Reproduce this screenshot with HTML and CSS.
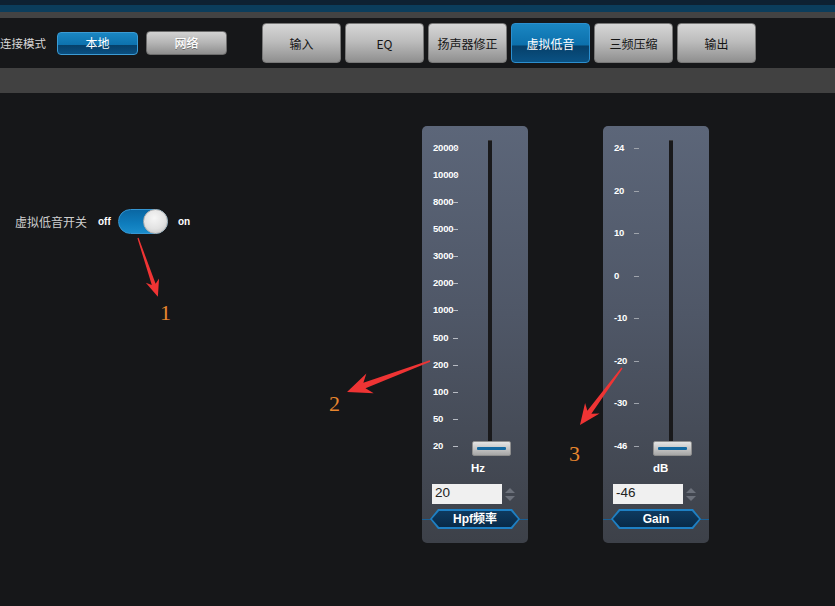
FILE: index.html
```html
<!DOCTYPE html>
<html lang="zh">
<head>
<meta charset="utf-8">
<title>虚拟低音</title>
<link rel="stylesheet" href="styles.css">
</head>
<body>
<div class="app">
  <div class="topstrip"></div>
  <div class="toolbar">
    <div class="conn">
      <span class="conn-label">连接模式</span>
      <button class="sbtn sbtn-active">本地</button>
      <button class="sbtn">网络</button>
    </div>
    <nav class="tabs">
      <button class="tab">输入</button>
      <button class="tab">EQ</button>
      <button class="tab">扬声器修正</button>
      <button class="tab tab-active">虚拟低音</button>
      <button class="tab">三频压缩</button>
      <button class="tab">输出</button>
    </nav>
  </div>
  <div class="subbar"></div>
  <main class="main">
    <section class="switch-area">
      <div class="switch-row">
        <span class="switch-label">虚拟低音开关</span>
        <span class="sw-text sw-off">off</span>
        <span class="toggle"><span class="knob"></span></span>
        <span class="sw-text sw-on">on</span>
      </div>
    </section>

    <div class="panel">
      <div class="scale">
        <div class="ticks">
          <div class="tick-row">20000</div>
          <div class="tick-row">10000</div>
          <div class="tick-row">8000</div>
          <div class="tick-row">5000</div>
          <div class="tick-row">3000</div>
          <div class="tick-row">2000</div>
          <div class="tick-row">1000</div>
          <div class="tick-row">500</div>
          <div class="tick-row">200</div>
          <div class="tick-row">100</div>
          <div class="tick-row">50</div>
          <div class="tick-row">20</div>
        </div>
        <div class="track"></div>
        <div class="thumb"></div>
      </div>
      <div class="unit unit-hz">Hz</div>
      <div class="value-row">
        <input class="value" type="text" value="20">
        <span class="spin"><span class="spin-up"></span><span class="spin-down"></span></span>
      </div>
      <div class="btn-row"><span class="hexbtn"><span class="hexbtn-in"></span><span class="hexbtn-text">Hpf频率</span></span></div>
    </div>

    <div class="panel panel-gain">
      <div class="scale">
        <div class="ticks">
          <div class="tick-row">24</div>
          <div class="tick-row">20</div>
          <div class="tick-row">10</div>
          <div class="tick-row">0</div>
          <div class="tick-row">-10</div>
          <div class="tick-row">-20</div>
          <div class="tick-row">-30</div>
          <div class="tick-row">-46</div>
        </div>
        <div class="track"></div>
        <div class="thumb"></div>
      </div>
      <div class="unit unit-db">dB</div>
      <div class="value-row">
        <input class="value" type="text" value="-46">
        <span class="spin"><span class="spin-up"></span><span class="spin-down"></span></span>
      </div>
      <div class="btn-row"><span class="hexbtn"><span class="hexbtn-in"></span><span class="hexbtn-text">Gain</span></span></div>
    </div>
  </main>

  <svg class="annot" width="835" height="606" viewBox="0 0 835 606">
    <g fill="#ef3434">
      <polygon transform="translate(138 238) rotate(71.3)" points="0,-0.6 49,-2 45,-7 62,0 45,7 49,2 0,0.6"/>
      <polygon transform="translate(430 361) rotate(159.5)" points="0,-0.8 70,-3 64,-10.5 88.6,0 64,10.5 70,3 0,0.8"/>
      <polygon transform="translate(622 368) rotate(126.4)" points="0,-0.7 55,-2.5 50,-9 70.8,0 50,9 55,2.5 0,0.7"/>
    </g>
    <g class="annot-num">
      <text x="160" y="320">1</text>
      <text x="329" y="411">2</text>
      <text x="569" y="461">3</text>
    </g>
  </svg>
</div>
</body>
</html>
```

FILE: styles.css
```css
* { box-sizing: border-box; }

html, body {
  margin: 0;
  padding: 0;
  background: #161719;
}

.app {
  position: relative;
  width: 835px;
  height: 606px;
  overflow: hidden;
  background: #161719;
  font-family: "Noto Sans CJK SC", "Liberation Sans", sans-serif;
}

.topstrip {
  height: 18px;
  background: linear-gradient(to bottom, #0e2132 0, #0e2132 5px, #0b3d5c 5px, #0b3d5c 12px, #434343 12px, #434343 18px);
}

.toolbar {
  height: 50px;
  display: flex;
  align-items: flex-start;
}

.conn {
  height: 50px;
  display: flex;
  align-items: center;
}

.conn-label {
  width: 45px;
  font-size: 11.5px;
  color: #d8d8d8;
  white-space: nowrap;
}

.sbtn {
  width: 81px;
  height: 24px;
  margin: 0;
  padding: 0;
  border: 1px solid #6c6c6c;
  border-radius: 4px;
  background: linear-gradient(to bottom, #d2d2d2 0%, #b4b4b4 50%, #8e8e8e 100%);
  color: #ffffff;
  font-family: "Noto Sans CJK SC", sans-serif;
  font-size: 12px;
  font-weight: 500;
  line-height: 20px;
  text-shadow: 0 1px 0 rgba(0, 0, 0, 0.35);
}

.sbtn:first-of-type { margin-left: 12px; }
.sbtn + .sbtn { margin-left: 8px; }

.sbtn-active {
  height: 23px;
  border-color: #3b9bd4;
  background: linear-gradient(to bottom, #1a86c2 0%, #0d72ae 55%, #06406a 58%, #0a4f80 100%);
  color: #ffffff;
  font-weight: 400;
  text-shadow: none;
}

.tabs {
  display: flex;
  gap: 4px;
  margin-left: 35px;
  padding-top: 5px;
}

.tab {
  width: 79px;
  height: 40px;
  margin: 0;
  padding: 0;
  border: 1px solid #777;
  border-radius: 4px;
  background: linear-gradient(to bottom, #d6d6d6 0%, #bdbdbd 45%, #a4a4a4 75%, #8f8f8f 100%);
  color: #151515;
  font-family: "Noto Sans CJK SC", sans-serif;
  font-size: 12px;
}

.tab-active {
  border-color: #2c8fcf;
  background: linear-gradient(to bottom, #1a86c2 0%, #0c70ac 55%, #06406a 58%, #0a5284 100%);
  color: #ffffff;
}

.subbar {
  height: 25px;
  background: #414141;
}

.main {
  display: flex;
  align-items: flex-start;
  height: 513px;
}

.switch-area {
  width: 422px;
  padding-top: 116px;
  padding-left: 15px;
}

.switch-row {
  display: flex;
  align-items: center;
  height: 25px;
}

.switch-label {
  width: 72px;
  font-size: 12px;
  color: #cfcfcf;
  white-space: nowrap;
}

.sw-text {
  font-family: "Liberation Sans", sans-serif;
  font-weight: bold;
  font-size: 10px;
  color: #ffffff;
}

.sw-off { margin-left: 11px; width: 20px; }
.sw-on { margin-left: 10px; }

.toggle {
  width: 50px;
  height: 25px;
  border-radius: 13px;
  border: 1px solid #3596d2;
  background: linear-gradient(to bottom, #0a67a3 0%, #0f7dbd 60%, #1a8cca 100%);
  display: flex;
  justify-content: flex-end;
  align-items: center;
}

.knob {
  width: 25px;
  height: 25px;
  margin-right: -1px;
  border-radius: 50%;
  border: 1px solid #b0b0b0;
  background: radial-gradient(circle at 45% 35%, #f6f6f6 0%, #e2e2e2 55%, #bdbdbd 100%);
}

.panel {
  position: relative;
  width: 106px;
  height: 417px;
  margin-top: 33px;
  padding-top: 16px;
  border-radius: 5px;
  background: linear-gradient(to bottom, #5c6679 0%, #4f5767 45%, #3d4149 100%);
}

.panel-gain { margin-left: 75px; }

.scale {
  position: relative;
  height: 310px;
}

.ticks {
  height: 100%;
  display: flex;
  flex-direction: column;
  justify-content: space-between;
  padding-left: 11px;
}

.tick-row {
  position: relative;
  height: 12px;
  line-height: 12px;
  font-family: "Liberation Sans", sans-serif;
  font-weight: bold;
  font-size: 9.5px;
  color: #ffffff;
  letter-spacing: -0.2px;
}

.tick-row::after {
  content: "";
  position: absolute;
  left: 20px;
  top: 6px;
  width: 5px;
  height: 1px;
  background: #b8bcc4;
}

.panel-gain .tick-row::after { background: #9ea3ab; }

.track {
  position: absolute;
  left: 66px;
  top: -2px;
  width: 4px;
  height: 305px;
  background: #19191b;
  border-top: 1px solid #3a3a3c;
}

.thumb {
  position: absolute;
  left: 50px;
  top: 299px;
  width: 39px;
  height: 15px;
  border: 1px solid #8e8e8e;
  border-radius: 2px;
  background: linear-gradient(to bottom, #e4e4e4 0%, #c6c6c6 50%, #a6a6a6 100%);
}

.thumb::after {
  content: "";
  position: absolute;
  left: 4px;
  right: 4px;
  top: 5px;
  height: 3px;
  border-radius: 1px;
  background: #1368a0;
}

.unit {
  margin-top: 9px;
  height: 14px;
  line-height: 14px;
  font-family: "Liberation Sans", sans-serif;
  font-weight: bold;
  font-size: 11.5px;
  color: #ffffff;
}

.unit-hz { padding-left: 49px; }
.unit-db { padding-left: 50px; }

.value-row {
  margin-top: 9px;
  height: 20px;
  display: flex;
  align-items: center;
  padding-left: 10px;
}

.value {
  width: 70px;
  height: 20px;
  margin: 0;
  border: none;
  outline: none;
  padding: 0 3px 3px 3px;
  background: #f0f0f0;
  color: #222;
  font-family: "Liberation Sans", sans-serif;
  font-size: 13.5px;
}

.spin {
  margin-left: 3px;
  width: 10px;
  display: flex;
  flex-direction: column;
  gap: 3px;
}

.spin-up, .spin-down {
  width: 0;
  height: 0;
  border-left: 5px solid transparent;
  border-right: 5px solid transparent;
}

.spin-up { border-bottom: 5px solid #6c717b; }
.spin-down { border-top: 5px solid #6c717b; }

.btn-row {
  position: relative;
  margin-top: 5px;
  height: 20px;
}

.btn-row::before {
  content: "";
  position: absolute;
  left: 0;
  right: 0;
  top: 10px;
  height: 1px;
  background: #1a5f94;
}

.hexbtn {
  position: relative;
  display: block;
  margin-left: 8px;
  width: 90px;
  height: 20px;
  background: #1e80c4;
  clip-path: polygon(8px 0, calc(100% - 8px) 0, 100% 50%, calc(100% - 8px) 100%, 8px 100%, 0 50%);
}

.hexbtn-in {
  position: absolute;
  left: 2px;
  right: 2px;
  top: 2px;
  bottom: 2px;
  background: linear-gradient(to bottom, #0e3a60 0%, #082a48 100%);
  clip-path: polygon(7px 0, calc(100% - 7px) 0, 100% 50%, calc(100% - 7px) 100%, 7px 100%, 0 50%);
}

.hexbtn-text {
  position: relative;
  display: block;
  text-align: center;
  line-height: 20px;
  font-family: "Liberation Sans", "Noto Sans CJK SC", sans-serif;
  font-weight: bold;
  font-size: 12px;
  color: #ffffff;
}

.annot {
  position: absolute;
  left: 0;
  top: 0;
  pointer-events: none;
}

.annot-num text {
  font-family: "Liberation Serif", serif;
  font-size: 22px;
  fill: #e8862e;
}
```
